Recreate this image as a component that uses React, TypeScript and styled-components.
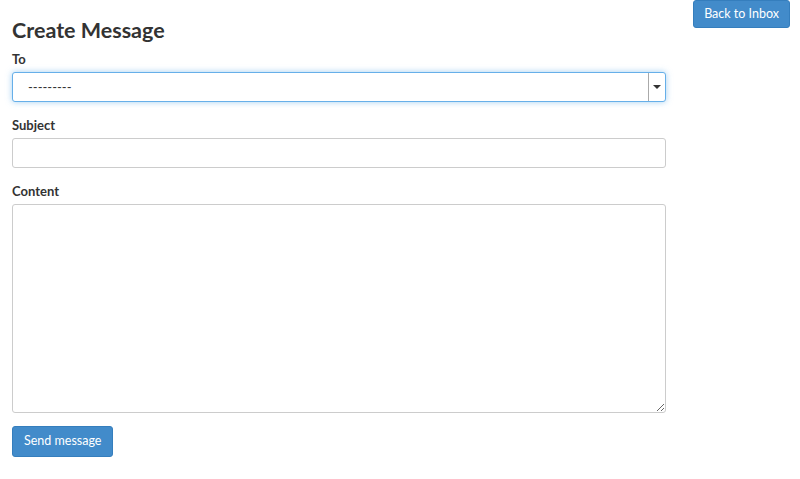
import React, { useState } from "react";
import styled, { createGlobalStyle } from "styled-components";

const GlobalStyle = createGlobalStyle`
  body {
    margin: 0;
    background: #fff;
    font-family: Lato, "Open Sans", sans-serif;
    color: #333;
  }
`;

const Page = styled.div`
  display: flex;
  justify-content: space-between;
  align-items: flex-start;
  padding: 0 10px 0 12px;
`;

const Main = styled.div`
  width: 654px;
`;

const Title = styled.h1`
  font-size: 21.5px;
  font-weight: 700;
  margin: 17px 0 8px;
  line-height: 26px;
  color: #333;
`;

const Field = styled.div`
  margin-bottom: 15px;
`;

const Label = styled.label`
  display: block;
  font-size: 13px;
  font-weight: 700;
  line-height: 16px;
  margin-bottom: 5px;
  color: #333;
`;

const SelectBox = styled.div<{ $focused?: boolean }>`
  display: flex;
  height: 30px;
  box-sizing: border-box;
  border: 1px solid ${(p) => (p.$focused ? "#66afe9" : "#ccc")};
  border-radius: 3px;
  box-shadow: ${(p) =>
    p.$focused ? "0 0 6px rgba(102,175,233,0.6)" : "none"};
  background: #fff;
`;

const SelectText = styled.div`
  flex: 1;
  font-size: 13px;
  line-height: 28px;
  padding-left: 15px;
  color: #333;
`;

const Arrow = styled.div`
  width: 16px;
  border-left: 1px solid #aaa;
  display: flex;
  align-items: center;
  justify-content: center;
  &::after {
    content: "";
    border-left: 4px solid transparent;
    border-right: 4px solid transparent;
    border-top: 4px solid #333;
  }
`;

const Input = styled.input`
  display: block;
  width: 100%;
  height: 30px;
  box-sizing: border-box;
  border: 1px solid #ccc;
  border-radius: 3px;
  font-family: inherit;
  font-size: 13px;
  padding: 4px 10px;
  outline: none;
`;

const TextArea = styled.textarea`
  display: block;
  width: 100%;
  height: 209px;
  box-sizing: border-box;
  border: 1px solid #ccc;
  border-radius: 3px;
  font-family: inherit;
  font-size: 13px;
  padding: 4px 10px;
  outline: none;
  resize: vertical;
`;

const Button = styled.button`
  background: #428bca;
  border: 1px solid #357ebd;
  border-radius: 3px;
  color: #fff;
  font-family: Lato, sans-serif;
  font-size: 12.5px;
  line-height: 18px;
  padding: 4px 10px;
  cursor: pointer;
`;

const SendButton = styled(Button)`
  margin-top: -2px;
  padding: 5px 11px 6px;
`;

const App = () => {
  const [subject, setSubject] = useState("");
  const [content, setContent] = useState("");

  return (
    <>
      <GlobalStyle />
      <Page>
        <Main>
          <Title>Create Message</Title>
          <Field>
            <Label>To</Label>
            <SelectBox $focused>
              <SelectText>---------</SelectText>
              <Arrow />
            </SelectBox>
          </Field>
          <Field>
            <Label>Subject</Label>
            <Input value={subject} onChange={(e) => setSubject(e.target.value)} />
          </Field>
          <Field>
            <Label>Content</Label>
            <TextArea value={content} onChange={(e) => setContent(e.target.value)} />
          </Field>
          <SendButton>Send message</SendButton>
        </Main>
        <Button>Back to Inbox</Button>
      </Page>
    </>
  );
};

export default App;
